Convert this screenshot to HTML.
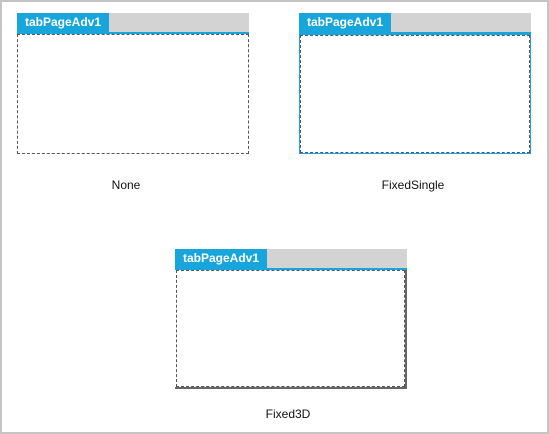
<html><head><style>
body{margin:0;width:549px;height:434px;overflow:hidden;background:#fff;font-family:"Liberation Sans",sans-serif}
.frame{position:absolute;left:0;top:0;width:545px;height:430px;border:2px solid #c4c4c4;background:#fff}
.c{position:absolute;width:232px}
.hd{position:absolute;left:0;top:0;width:232px;height:19px;background:#d3d3d4}
.tab{position:absolute;left:0;top:0;width:92px;height:19px;background:#17a5dc;color:#fff;font-weight:bold;font-size:12px;line-height:19px;padding-left:8px;box-sizing:border-box}
.ln{position:absolute;left:0;top:19px;width:232px;height:2px;background:#17a5dc}
.bd{position:absolute;left:0;top:21px;width:232px;box-sizing:border-box;border:1px dashed #555}
.lb{position:absolute;font-size:12px;color:#111;transform:translateX(-50%)}
</style></head><body>
<div class="frame"></div>
<div class="c" style="left:17px;top:13px"><div class="hd"></div><div class="tab">tabPageAdv1</div><div class="ln"></div><div class="bd" style="height:120px"></div></div>
<div class="c" style="left:299px;top:13px"><div class="hd"></div><div class="tab">tabPageAdv1</div><div class="ln"></div>
<div style="position:absolute;left:0;top:21px;width:232px;height:120px;box-sizing:border-box;border:1px solid #17a5dc"><div style="position:absolute;left:0;top:0;right:0;bottom:0;border:1px dashed #555"></div></div></div>
<div class="c" style="left:175px;top:249px"><div class="hd"></div><div class="tab">tabPageAdv1</div><div class="ln"></div>
<div style="position:absolute;left:0;top:21px;width:232px;height:119px;box-sizing:border-box;border-right:2px solid #666;border-bottom:2px solid #666"><div style="position:absolute;left:1px;top:0;right:0;bottom:0;border:1px dashed #555"></div></div></div>
<div class="lb" style="left:126px;top:178px">None</div>
<div class="lb" style="left:413px;top:178px">FixedSingle</div>
<div class="lb" style="left:288px;top:407px">Fixed3D</div>
</body></html>
